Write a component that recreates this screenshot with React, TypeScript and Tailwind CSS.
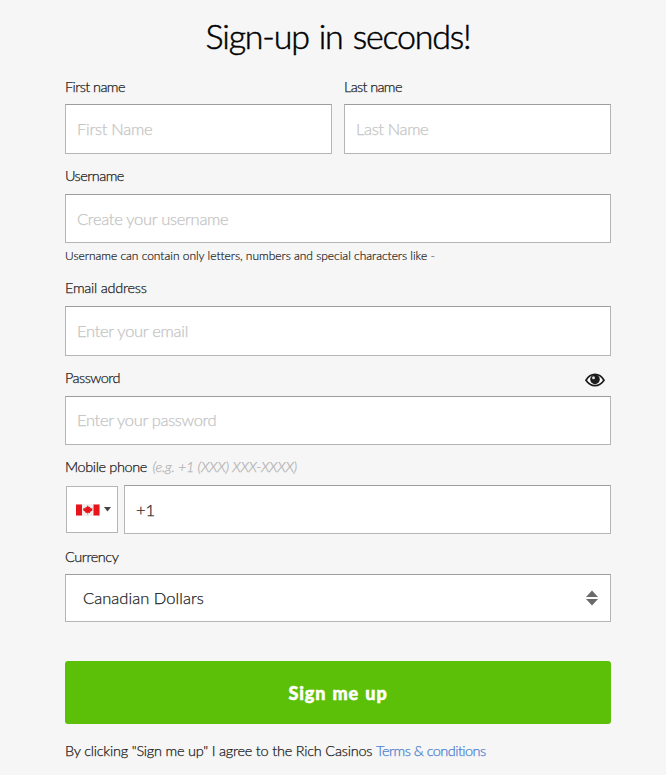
import type { ReactNode } from "react";

const BOX = "block w-full border border-[#b4b6b6] border-t-[#9c9e9e] bg-white pl-[11px] text-[16.5px] font-light text-[#222] outline-none [-webkit-text-stroke:0.25px] placeholder:text-[#c4c4c4] placeholder:opacity-100";

function Label({ children, className }: { children: ReactNode; className: string }) {
  return <label className={`block whitespace-nowrap text-[14.5px] font-light text-[#1c1c1c] [-webkit-text-stroke:0.25px] ${className}`}>{children}</label>;
}

function Eye() {
  return (
    <svg className="mr-[6px] mt-[13px] h-[14px] w-[20px]" viewBox="0 0 20 14">
      <path d="M1 7.2C3.5 3 6.500 1.400 10 1.400S16.500 3 19 7.200C16.500 11 13.500 12.600 10 12.600S3.500 11 1 7.200Z" fill="#fff" stroke="#1c1c1c" strokeWidth="1.7" />
      <circle cx="10" cy="6.400" r="4.800" fill="#1c1c1c" />
      <circle cx="8.500" cy="4.800" r="1.500" fill="#ddd" />
    </svg>
  );
}

function Flag() {
  return (
    <svg className="h-[12px] w-[24px]" viewBox="0 0 24 12">
      <path fill="#f3eeee" d="M0 0h24v12H0z" />
      <path fill="#e8141c" d="M0 0.500h6v11H0zM17.500 0.500h6v11h-6z" />
      <path fill="#e8141c" d="M11.800 1.300l1.200 1.900 1.200-.4-.3 1.800 1-.8.5.6 1.200-.2-.4 1.400.4.600-2.600 1.900.2.800-2.100-.2v1.700h-.6V8.700l-2.100.2.200-.8L7 6.200l.4-.6L7 4.200l1.200.2.500-.6 1 .8-.3-1.800 1.200.4z" />
    </svg>
  );
}

export default function App() {
  return (
    <main className="h-[775px] w-[666px] overflow-hidden bg-[#f6f6f6] pl-[65px] pr-[55px] font-[Lato,sans-serif]">
      <h1 className="h-[74px] whitespace-nowrap pt-[12px] text-center text-[34px] font-light leading-[48px] tracking-[-1.2px] text-black [-webkit-text-stroke:0.5px] [word-spacing:2px]">Sign-up in seconds!</h1>
      <form>
        <div className="flex gap-3">
          <div className="flex-1">
            <Label className="h-[30px] leading-[26px] tracking-[-0.58px]">First name</Label>
            <input className={`${BOX} h-[50px] tracking-[-0.25px]`} placeholder="First Name" />
          </div>
          <div className="flex-1">
            <Label className="h-[30px] leading-[26px] tracking-[-0.65px]">Last name</Label>
            <input className={`${BOX} h-[50px] tracking-[-0.35px]`} placeholder="Last Name" />
          </div>
        </div>
        <Label className="h-[40px] pt-[9px] leading-[26px] tracking-[-0.55px]">Username</Label>
        <input className={`${BOX} h-[49px] pt-px tracking-[-0.28px]`} placeholder="Create your username" />
        <p className="h-[27px] whitespace-nowrap text-[12px] font-light leading-[26px] tracking-[-0.02px] text-[#1c1c1c] [-webkit-text-stroke:0.2px]">Username can contain only letters, numbers and special characters like -</p>
        <Label className="h-[36px] pt-[5px] leading-[26px] tracking-[-0.25px]">Email address</Label>
        <input className={`${BOX} h-[50px] tracking-[-0.28px]`} placeholder="Enter your email" />
        <div className="flex h-[40px] justify-between">
          <Label className="pt-[9px] leading-[26px] tracking-[-0.55px]">Password</Label>
          <span className="pt-[4px]"><Eye /></span>
        </div>
        <input className={`${BOX} h-[49px] pb-[2px] tracking-[-0.33px]`} placeholder="Enter your password" />
        <Label className="h-[40px] pt-[9px] leading-[26px] tracking-[-0.38px]">
          <span>Mobile phone</span> <span className="ml-[2px] italic tracking-[-0.27px] text-[#b4b4b4]">(e.g. +1 (XXX) XXX-XXXX)</span>
        </Label>
        <div className="flex h-[49px] gap-[6px] pl-px">
          <button type="button" className="mt-px flex h-[47px] w-[52px] items-center border border-[#b4b6b6] bg-white pl-[9px]">
            <Flag />
            <svg className="ml-[4px] h-[5px] w-[7px]" viewBox="0 0 7 5"><path d="M0 0h7L3.500 4.500z" fill="#444" /></svg>
          </button>
          <input className={`${BOX} flex-1 pt-[2px]`} defaultValue="+1" />
        </div>
        <Label className="h-[40px] pt-[10px] leading-[26px] tracking-[-0.45px]">Currency</Label>
        <button type="button" className={`${BOX} flex! h-[48px] items-center justify-between pl-[17px]! pr-[12px]`}>
          <span className="tracking-[0.04px]">Canadian Dollars</span>
          <svg className="h-[16px] w-[12px]" viewBox="0 0 12 16"><path d="M0 7L6 0.500L12 7zM0 9L6 15.500L12 9z" fill="#6b6b6b" /></svg>
        </button>
        <button type="button" className="mt-[39px] block h-[63px] w-full rounded-[3px] bg-[#5cc009] pt-px text-[18px] font-black text-white">
          <span className="tracking-[0.9px] [-webkit-text-stroke:0.5px] [word-spacing:1px]">Sign me up</span>
        </button>
        <p className="whitespace-nowrap pt-[14px] text-[14.5px] font-light leading-[26px] tracking-[-0.22px] text-[#1c1c1c] [-webkit-text-stroke:0.25px]">
          <span>By clicking "Sign me up" I agree to the Rich Casinos</span> <a className="tracking-[-0.55px] text-[#4a7fd0]">Terms &amp; conditions</a>
        </p>
      </form>
    </main>
  );
}
